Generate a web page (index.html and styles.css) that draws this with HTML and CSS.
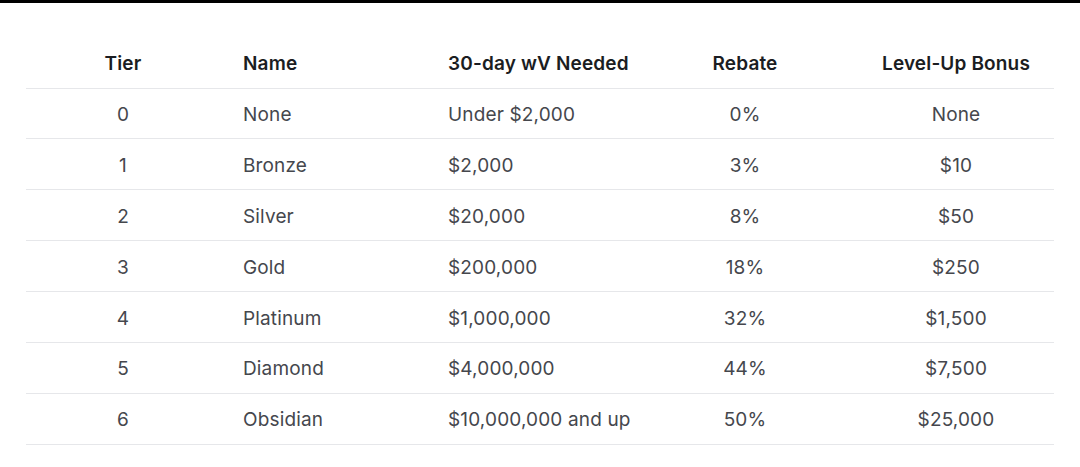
FILE: index.html
```html
<!DOCTYPE html>
<html lang="en">
<head>
<meta charset="utf-8">
<title>Tiers</title>
<link rel="stylesheet" href="styles.css">
</head>
<body>
<div class="topbar"></div>
<main class="wrap">
  <table class="tiers">
    <colgroup>
      <col class="c-tier"><col class="c-name"><col class="c-vol"><col class="c-rebate"><col class="c-bonus">
    </colgroup>
    <thead>
      <tr>
        <th class="center">Tier</th>
        <th>Name</th>
        <th>30-day wV Needed</th>
        <th class="center">Rebate</th>
        <th class="center">Level-Up Bonus</th>
      </tr>
    </thead>
    <tbody>
      <tr><td class="center">0</td><td>None</td><td>Under $2,000</td><td class="center">0%</td><td class="center">None</td></tr>
      <tr><td class="center">1</td><td>Bronze</td><td>$2,000</td><td class="center">3%</td><td class="center">$10</td></tr>
      <tr><td class="center">2</td><td>Silver</td><td>$20,000</td><td class="center">8%</td><td class="center">$50</td></tr>
      <tr><td class="center">3</td><td>Gold</td><td>$200,000</td><td class="center">18%</td><td class="center">$250</td></tr>
      <tr><td class="center">4</td><td>Platinum</td><td>$1,000,000</td><td class="center">32%</td><td class="center">$1,500</td></tr>
      <tr><td class="center">5</td><td>Diamond</td><td>$4,000,000</td><td class="center">44%</td><td class="center">$7,500</td></tr>
      <tr><td class="center">6</td><td>Obsidian</td><td>$10,000,000 and up</td><td class="center">50%</td><td class="center">$25,000</td></tr>
    </tbody>
  </table>
</main>
</body>
</html>
```

FILE: styles.css
```css
* { box-sizing: border-box; }
html, body { margin: 0; padding: 0; background: #fff; }
body {
  font-family: Inter, "Noto Sans", sans-serif;
  color: #45474d;
}
.topbar { height: 3px; background: #000; }
.wrap { padding: 34px 26px 0 26px; }
.tiers {
  width: 1028px;
  border-collapse: collapse;
  table-layout: fixed;
}
.c-tier { width: 194px; }
.c-name { width: 205px; }
.c-vol { width: 207px; }
.c-rebate { width: 226px; }
.c-bonus { width: 196px; }
th, td {
  text-align: left;
  padding: 2px 0 0 23px;
  border-bottom: 1px solid #e6e7ea;
  font-size: 19px;
  letter-spacing: 0.15px;
  white-space: nowrap;
  vertical-align: middle;
}
th {
  height: 51px;
  font-weight: 600;
  color: #1b1d22;
}
td {
  height: 50.9px;
  font-weight: 400;
  color: #45474d;
}
th.center, td.center { text-align: center; padding: 2px 0 0 0; }
```
